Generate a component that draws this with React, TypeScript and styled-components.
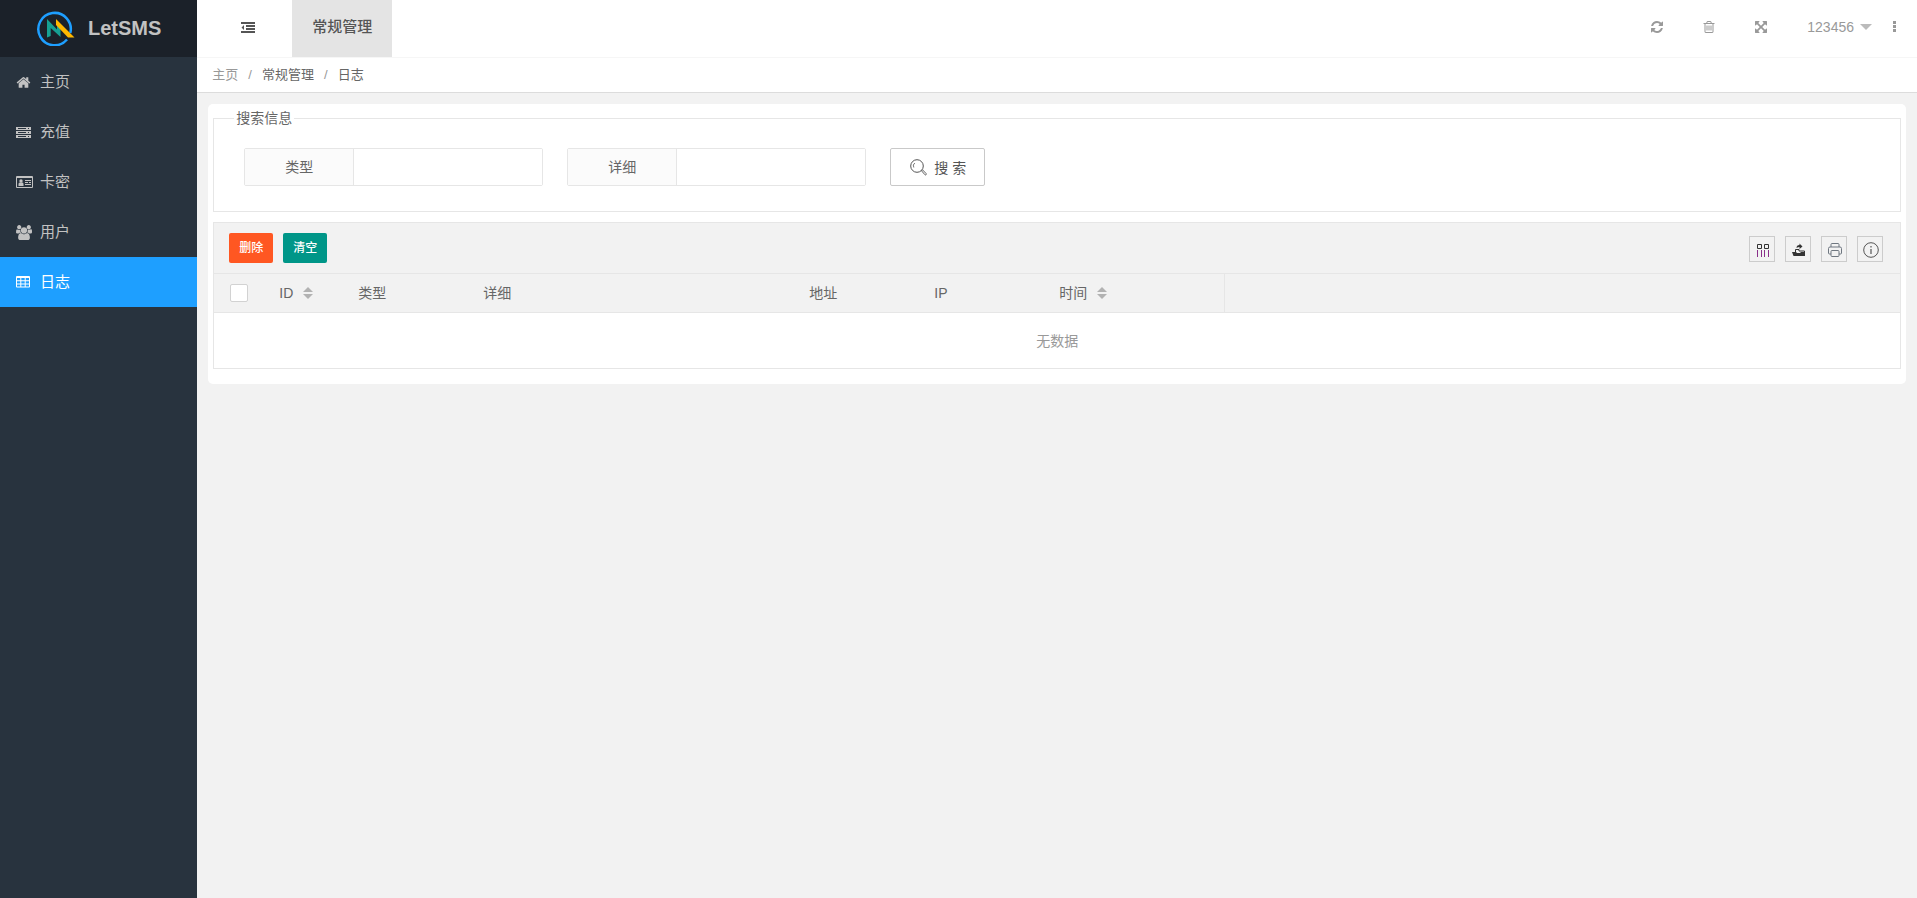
import React from "react";
import styled, { createGlobalStyle, css } from "styled-components";

const sans = `"Liberation Sans", "Noto Sans CJK SC", sans-serif`;

const GlobalStyle = createGlobalStyle`
  *, *::before, *::after { box-sizing: border-box; }
  html, body, #root { min-height: 100vh; }
  body {
    margin: 0;
    background: #f2f2f2;
    color: #666;
    font: 14px/24px ${sans};
  }
  a { color: inherit; text-decoration: none; }
  button, input { font: inherit; color: inherit; }
  button { cursor: pointer; }
  ul, ol { list-style: none; margin: 0; padding: 0; }
`;

const Shell = styled.div`
  display: flex;
  min-height: 100vh;
`;

const Sidebar = styled.aside`
  flex: 0 0 197px;
  background: #28333e;
  color: #c2c2c2;
`;

const Brand = styled.a`
  display: flex;
  align-items: center;
  gap: 13px;
  height: 57px;
  padding: 0 36px 2px;
  background: #1b2129;
  font-size: 20px;
  font-weight: bold;
`;

const MenuLink = styled.a<{ $active?: boolean }>`
  display: flex;
  align-items: center;
  height: 50px;
  padding: 0 16px;
  font-size: 15px;
  ${(p) => p.$active && css`
    background: #1e9fff;
    color: #fff;
  `}
`;

const MenuIcon = styled.span`
  display: flex;
  width: 24px;
`;

const Main = styled.div`
  flex: 1;
  min-width: 0;
`;

const Header = styled.header`
  display: flex;
  justify-content: space-between;
  height: 58px;
  background: #fff;
  border-bottom: 1px solid #f6f6f6;
`;

const HeaderGroup = styled.div`
  display: flex;
  align-items: stretch;
`;

const ToggleButton = styled.button`
  display: flex;
  align-items: center;
  justify-content: center;
  width: 95px;
  padding: 0 0 2px 6px;
  border: 0;
  background: none;
  color: #555;
`;

const HeaderTab = styled.a`
  display: flex;
  align-items: center;
  padding: 0 20px 4px;
  background: #e4e4e4;
  color: #555;
  font-size: 15px;
  font-weight: 500;
`;

const ToolButton = styled.button`
  display: flex;
  align-items: center;
  justify-content: center;
  gap: 6px;
  min-width: 52px;
  padding: 0 0 4px;
  border: 0;
  background: none;
  color: #999;
`;

const UserButton = styled(ToolButton)`
  padding-left: 20px;
`;

const MoreButton = styled(ToolButton)`
  min-width: 45px;
`;

const Caret = styled.span`
  border: 6px solid transparent;
  border-top-color: #bbb;
  border-bottom: 0;
`;

const Breadcrumb = styled.nav`
  height: 35px;
  padding: 0 15px;
  background: #fff;
  border-bottom: 1px solid #dcdcdc;
  font-size: 13px;
  line-height: 34px;
`;

const Crumbs = styled.ol`
  display: flex;
`;

const Crumb = styled.li<{ $muted?: boolean }>`
  color: ${(p) => (p.$muted ? "#999" : "#666")};
  &:not(:first-child)::before {
    content: "/";
    margin: 0 10px;
    color: #999;
  }
`;

const Card = styled.main`
  margin: 11px;
  padding: 2px 5px 15px;
  border-radius: 5px;
  background: #fff;
`;

const SearchBox = styled.fieldset`
  margin: 0 0 10px;
  padding: 18px 30px 25px;
  border: 1px solid #e6e6e6;
`;

const Legend = styled.legend`
  margin-left: -10px;
  padding: 0 2px;
`;

const SearchForm = styled.form`
  display: flex;
  flex-wrap: wrap;
  gap: 24px;
`;

const Field = styled.div`
  display: flex;
  width: 299px;
  height: 38px;
  border: 1px solid #e6e6e6;
  border-radius: 2px;
`;

const FieldLabel = styled.label`
  width: 109px;
  border-right: 1px solid #e6e6e6;
  background: #fbfbfb;
  line-height: 36px;
  text-align: center;
`;

const FieldInput = styled.input`
  flex: 1;
  min-width: 0;
  padding: 0 10px;
  border: 0;
  outline: 0;
  background: #fff;
`;

const SearchButton = styled.button`
  display: flex;
  align-items: center;
  gap: 7px;
  height: 38px;
  padding: 1px 18px 0 19px;
  border: 1px solid #c9c9c9;
  border-radius: 2px;
  background: #fff;
  color: #555;
`;

const DataPanel = styled.section`
  border: 1px solid #e6e6e6;
`;

const Toolbar = styled.div`
  display: flex;
  align-items: center;
  justify-content: space-between;
  height: 51px;
  padding: 0 17px 0 15px;
  background: #f2f2f2;
  border-bottom: 1px solid #e6e6e6;
`;

const ButtonRow = styled.div`
  display: flex;
  gap: 10px;
`;

const ActionButton = styled.button<{ $color: string }>`
  height: 30px;
  padding: 0 10px;
  border: 0;
  border-radius: 2px;
  background: ${(p) => p.$color};
  color: #fff;
  font-size: 12px;
  font-weight: 500;
`;

const SquareButton = styled.button`
  display: flex;
  align-items: center;
  justify-content: center;
  width: 26px;
  height: 26px;
  margin-top: 2px;
  padding: 2px 0 0 2px;
  border: 1px solid #ccc;
  background: none;
  color: #333;
`;

const DataTable = styled.table`
  width: 100%;
  table-layout: fixed;
  border-collapse: separate;
  border-spacing: 0;
`;

const HeadCell = styled.th<{ $edge?: boolean }>`
  height: 39px;
  padding: 0 15px;
  background: #f2f2f2;
  border-bottom: 1px solid #e6e6e6;
  border-right: ${(p) => (p.$edge ? "1px solid #e6e6e6" : "0")};
  font-weight: normal;
  text-align: left;
  vertical-align: middle;
`;

const EmptyCell = styled.td`
  height: 55px;
  padding: 0;
  color: #999;
  text-align: center;
`;

const CheckBox = styled.input`
  display: block;
  appearance: none;
  width: 18px;
  height: 18px;
  margin: 0 1px;
  border: 1px solid #d2d2d2;
  border-radius: 2px;
  background: #fff;
  &:checked { background: #5fb878; }
`;

const SortLabel = styled.span`
  display: flex;
  align-items: center;
  gap: 10px;
`;

const SortMark = styled.span`
  display: grid;
  gap: 2px;
  &::before, &::after {
    content: "";
    border: 5px solid transparent;
  }
  &::before { border-top: 0; border-bottom-color: #b2b2b2; }
  &::after { border-bottom: 0; border-top-color: #b2b2b2; }
`;

type GlyphProps = { d: string; w?: number; size?: number };
const Glyph = ({ d, w = 1792, size = 14 }: GlyphProps) => (
  <svg width={Math.round((size * w) / 1792)} height={size} viewBox={`0 0 ${w} 1792`} fill="currentColor" aria-hidden="true">
    <path d={d} />
  </svg>
);

const homePath =
  "M1472 992v480q0 26-19 45t-45 19h-384v-384h-256v384h-384q-26 0-45-19t-19-45v-480q0-1 .5-3t.5-3l575-474 575 474q1 2 1 6zm223-69l-62 74q-8 9-21 11h-3q-13 0-21-7l-692-577-692 577q-12 8-24 7-13-2-21-11l-62-74q-8-10-7-23.5t11-21.5l719-599q32-26 76-26t76 26l244 204v-195q0-14 9-23t23-9h192q14 0 23 9t9 23v408l219 182q10 8 11 21.5t-7 23.5z";
const usersPath =
  "M593 896q-162 5-265 128h-134q-82 0-138-40.5t-56-118.5q0-353 124-353 6 0 43.5 21t97.5 42.5 119 21.5q67 0 133-23-5 37-5 66 0 159 90 278zm1071 637q0 120-73 189.5t-194 69.5h-874q-121 0-194-69.5t-73-189.5q0-53 3.5-103.5t14-109 26.5-108.5 43-97.5 62-81 85.5-53.5 111.5-20q10 0 43 21.5t73 48 107 48 135 21.5 135-21.5 107-48 73-48 43-21.5q61 0 111.5 20t85.5 53.5 62 81 43 97.5 26.5 108.5 14 109 3.5 103.5zm-1024-1277q0 106-75 181t-181 75-181-75-75-181 75-181 181-75 181 75 75 181zm704 384q0 159-112.5 271.5t-271.5 112.5-271.5-112.5-112.5-271.5 112.5-271.5 271.5-112.5 271.5 112.5 112.5 271.5zm576 225q0 78-56 118.5t-138 40.5h-134q-103-123-265-128 90-119 90-278 0-29-5-66 66 23 133 23 59 0 119-21.5t97.5-42.5 43.5-21q124 0 124 353zm-128-609q0 106-75 181t-181 75-181-75-75-181 75-181 181-75 181 75 75 181z";
const refreshPath =
  "M1639 1056q0 5-1 7-64 268-268 434.5t-478 166.5q-146 0-282.5-55t-243.5-157l-129 129q-19 19-45 19t-45-19-19-45v-448q0-26 19-45t45-19h448q26 0 45 19t19 45-19 45l-137 137q71 66 161 102t187 36q134 0 250-65t186-179q11-17 53-117 8-23 30-23h192q13 0 22.5 9.5t9.5 22.5zm25-800v448q0 26-19 45t-45 19h-448q-26 0-45-19t-19-45 19-45l138-138q-148-137-349-137-134 0-250 65t-186 179q-11 17-53 117-8 23-30 23h-199q-13 0-22.5-9.5t-9.5-22.5v-7q65-268 270-434.5t480-166.5q146 0 284 55.5t245 156.5l130-129q19-19 45-19t45 19 19 45z";
const trashPath =
  "M704 736v576q0 14-9 23t-23 9h-64q-14 0-23-9t-9-23v-576q0-14 9-23t23-9h64q14 0 23 9t9 23zm256 0v576q0 14-9 23t-23 9h-64q-14 0-23-9t-9-23v-576q0-14 9-23t23-9h64q14 0 23 9t9 23zm256 0v576q0 14-9 23t-23 9h-64q-14 0-23-9t-9-23v-576q0-14 9-23t23-9h64q14 0 23 9t9 23zm128 724v-948h-896v948q0 22 7 40.5t14.5 27 10.5 8.5h832q3 0 10.5-8.5t14.5-27 7-40.5zm-672-1076h448l-48-117q-7-9-17-11h-317q-10 2-17 11zm928 32v64q0 14-9 23t-23 9h-96v948q0 83-47 143.5t-113 60.5h-832q-66 0-113-58.5t-47-141.5v-952h-96q-14 0-23-9t-9-23v-64q0-14 9-23t23-9h309l70-167q15-37 54-63t79-26h320q40 0 79 26t54 63l70 167h309q14 0 23 9t9 23z";
const expandPath =
  "M1411 541l-355 355 355 355 144-144q29-31 70-14 39 17 39 59v448q0 26-19 45t-45 19h-448q-42 0-59-40-17-39 14-69l144-144-355-355-355 355 144 144q31 30 14 69-17 40-59 40h-448q-26 0-45-19t-19-45v-448q0-42 40-59 39-17 69 14l144 144 355-355-355-355-144 144q-19 19-45 19-12 0-24-5-40-17-40-59v-448q0-26 19-45t45-19h448q42 0 59 40 17 39-14 69l-144 144 355 355 355-355-144-144q-31-30-14-69 17-40 59-40h448q26 0 45 19t19 45v448q0 42-39 59-13 5-25 5-26 0-45-19z";

const ServerIcon = () => (
  <svg width="15" height="11" viewBox="0 0 15 11" fill="currentColor" aria-hidden="true">
    <path
      fillRule="evenodd"
      d="M0 0h15v3H0zM2 1v1h8V1zM12 1v1h1V1zM0 4h15v3H0zM2 5v1h8V5zM12 5v1h1V5zM0 8h15v3H0zM2 9v1h8V9zM12 9v1h1V9z"
    />
  </svg>
);

const CardIcon = () => (
  <svg width="17" height="12" viewBox="0 0 17 12" fill="currentColor" aria-hidden="true">
    <path fillRule="evenodd" d="M1 0h15a1 1 0 0 1 1 1v10a1 1 0 0 1-1 1H1a1 1 0 0 1-1-1V1a1 1 0 0 1 1-1zM1 2v9h15V2z" />
    <circle cx="5" cy="5" r="1.7" />
    <path d="M2.500 10V8q0-1.500 1.200-1.500h2.600q1.200 0 1.200 1.500v2z" />
    <path d="M9 4h6v1H9zM9 6h3v1H9zM13 6h2v1h-2zM9 8h6v1H9z" />
  </svg>
);

const TableIcon = () => (
  <svg width="14" height="12" viewBox="0 0 14 12" fill="currentColor" aria-hidden="true">
    <path
      fillRule="evenodd"
      d="M1 0h12a1 1 0 0 1 1 1v9.500a1 1 0 0 1-1 1H1a1 1 0 0 1-1-1V1a1 1 0 0 1 1-1zM1 2v2.300h3.300V2zM5.300 2v2.300h3.400V2zM9.700 2v2.300H13V2zM1 5.200v2.300h3.300V5.200zM5.300 5.200v2.300h3.400V5.200zM9.700 5.200v2.300H13V5.200zM1 8.400v2.200h3.300V8.400zM5.300 8.400v2.200h3.400V8.400zM9.700 8.400v2.200H13V8.400z"
    />
  </svg>
);

const OutdentIcon = () => (
  <svg width="14" height="11" viewBox="0 0 14 11" fill="currentColor" aria-hidden="true">
    <path d="M0 0h14v2H0zM5 3h9v2H5zM5 6h9v2H5zM0 9h14v2H0zM3 3v5L.5 5.500z" />
  </svg>
);

const DotsIcon = () => (
  <svg width="3" height="11" viewBox="0 0 3 11" fill="currentColor" aria-hidden="true">
    <path d="M0 0h3v3H0zM0 4h3v3H0zM0 8h3v3H0z" />
  </svg>
);

const LogoIcon = () => (
  <svg width="39" height="36" viewBox="0 0 39 36" aria-hidden="true">
    <path d="M31 29.500A16.200 16.200 0 1 1 34.300 23" fill="none" stroke="#1e9fff" strokeWidth="2.500" />
    <path d="M11 9l10 10.500V14l3.500 4v9l-9.800-9v8L11 27.500z" fill="#16a093" />
    <path d="M20 9l18.500 18.500H32L20 15z" fill="#ffb800" />
  </svg>
);

const SearchIcon = () => (
  <svg width="17" height="17" viewBox="0 0 17 17" fill="none" stroke="currentColor" aria-hidden="true">
    <circle cx="7" cy="7" r="6.300" />
    <path d="M3.800 8.500a3.500 3.500 0 0 1 1-4.500" strokeWidth=".8" />
    <path d="M11.500 11.800l1-1 3.600 3.700a.8.8 0 0 1-1.200 1.200z" strokeWidth=".9" />
  </svg>
);

const ColumnsIcon = () => (
  <svg width="14" height="14" viewBox="0 0 14 14" fill="none" stroke="currentColor" aria-hidden="true">
    <path d="M1.500 1.500h4v4h-4zM8.500 1.500h4v4h-4z" />
    <path d="M1.500 7v7M5.500 7v7M8.500 7v7M12.500 7v7" stroke="#8a2f8a" />
  </svg>
);

const ExportIcon = () => (
  <svg width="14" height="14" viewBox="0 0 14 14" fill="currentColor" aria-hidden="true">
    <path d="M0 9h4l1 1h3l1-1h4v4H1.500z" />
    <path d="M3.500 9V6.500H7V8h5.500v5" fill="none" stroke="currentColor" />
    <path d="M4.500 5q0-3 3-3V.5L10.500 3.500 7.500 6V4Q6 4 4.500 5z" />
  </svg>
);

const PrintIcon = () => (
  <svg width="14" height="14" viewBox="0 0 14 14" fill="none" stroke="#6f7780" aria-hidden="true">
    <path d="M3 4V1.500q0-1 1-1h6q1 0 1 1V4M3 11H1.500q-1 0-1-1V5.500q0-1.500 1.500-1.500h10q1.500 0 1.500 1.500V10q0 1-1 1H11M3 8.500q0-1 1-1h6q1 0 1 1v4q0 1-1 1H4q-1 0-1-1z" />
  </svg>
);

const InfoIcon = () => (
  <svg width="16" height="16" viewBox="0 0 16 16" fill="none" stroke="#555" aria-hidden="true">
    <circle cx="8" cy="8" r="7.300" />
    <path d="M8 4v1.500M8 7v5" strokeWidth="1.200" />
  </svg>
);

const menu = [
  { label: "主页", icon: <Glyph d={homePath} size={15} /> },
  { label: "充值", icon: <ServerIcon /> },
  { label: "卡密", icon: <CardIcon /> },
  { label: "用户", icon: <Glyph d={usersPath} w={1920} size={15} /> },
  { label: "日志", icon: <TableIcon />, active: true },
];

const columns = [
  { label: "ID", width: 79, sortable: true },
  { label: "类型", width: 125 },
  { label: "详细", width: 326 },
  { label: "地址", width: 125 },
  { label: "IP", width: 125 },
  { label: "时间", width: 181, sortable: true, edge: true },
];

const tools = [
  { label: "筛选列", icon: <ColumnsIcon /> },
  { label: "导出", icon: <ExportIcon /> },
  { label: "打印", icon: <PrintIcon /> },
  { label: "提示", icon: <InfoIcon /> },
];

export default function App() {
  return (
    <>
      <GlobalStyle />
      <Shell>
        <Sidebar>
          <Brand href="#">
            <LogoIcon />
            LetSMS
          </Brand>
          <nav>
            <ul>
              {menu.map((m) => (
                <li key={m.label}>
                  <MenuLink href="#" $active={m.active}>
                    <MenuIcon>{m.icon}</MenuIcon>
                    {m.label}
                  </MenuLink>
                </li>
              ))}
            </ul>
          </nav>
        </Sidebar>
        <Main>
          <Header>
            <HeaderGroup>
              <ToggleButton type="button" aria-label="侧边伸缩"><OutdentIcon /></ToggleButton>
              <HeaderTab href="#">常规管理</HeaderTab>
            </HeaderGroup>
            <HeaderGroup>
              <ToolButton type="button" aria-label="刷新"><Glyph d={refreshPath} /></ToolButton>
              <ToolButton type="button" aria-label="清理缓存"><Glyph d={trashPath} /></ToolButton>
              <ToolButton type="button" aria-label="全屏"><Glyph d={expandPath} /></ToolButton>
              <UserButton type="button">123456<Caret /></UserButton>
              <MoreButton type="button" aria-label="更多"><DotsIcon /></MoreButton>
            </HeaderGroup>
          </Header>
          <Breadcrumb>
            <Crumbs>
              <Crumb $muted><a href="#">主页</a></Crumb>
              <Crumb><a href="#">常规管理</a></Crumb>
              <Crumb>日志</Crumb>
            </Crumbs>
          </Breadcrumb>
          <Card>
            <SearchBox>
              <Legend>搜索信息</Legend>
              <SearchForm onSubmit={(e) => e.preventDefault()}>
                <Field>
                  <FieldLabel htmlFor="type">类型</FieldLabel>
                  <FieldInput id="type" type="text" />
                </Field>
                <Field>
                  <FieldLabel htmlFor="detail">详细</FieldLabel>
                  <FieldInput id="detail" type="text" />
                </Field>
                <SearchButton type="submit"><SearchIcon />搜 索</SearchButton>
              </SearchForm>
            </SearchBox>
            <DataPanel>
              <Toolbar>
                <ButtonRow>
                  <ActionButton type="button" $color="#ff5722">删除</ActionButton>
                  <ActionButton type="button" $color="#009688">清空</ActionButton>
                </ButtonRow>
                <ButtonRow>
                  {tools.map((t) => (
                    <SquareButton key={t.label} type="button" aria-label={t.label}>{t.icon}</SquareButton>
                  ))}
                </ButtonRow>
              </Toolbar>
              <DataTable>
                <colgroup>
                  <col width={50} />
                  {columns.map((c) => <col key={c.label} width={c.width} />)}
                  <col />
                </colgroup>
                <thead>
                  <tr>
                    <HeadCell><CheckBox type="checkbox" aria-label="全选" /></HeadCell>
                    {columns.map((c) => (
                      <HeadCell key={c.label} $edge={c.edge}>
                        {c.sortable ? <SortLabel>{c.label}<SortMark /></SortLabel> : c.label}
                      </HeadCell>
                    ))}
                    <HeadCell />
                  </tr>
                </thead>
                <tbody>
                  <tr><EmptyCell colSpan={columns.length + 2}>无数据</EmptyCell></tr>
                </tbody>
              </DataTable>
            </DataPanel>
          </Card>
        </Main>
      </Shell>
    </>
  );
}
